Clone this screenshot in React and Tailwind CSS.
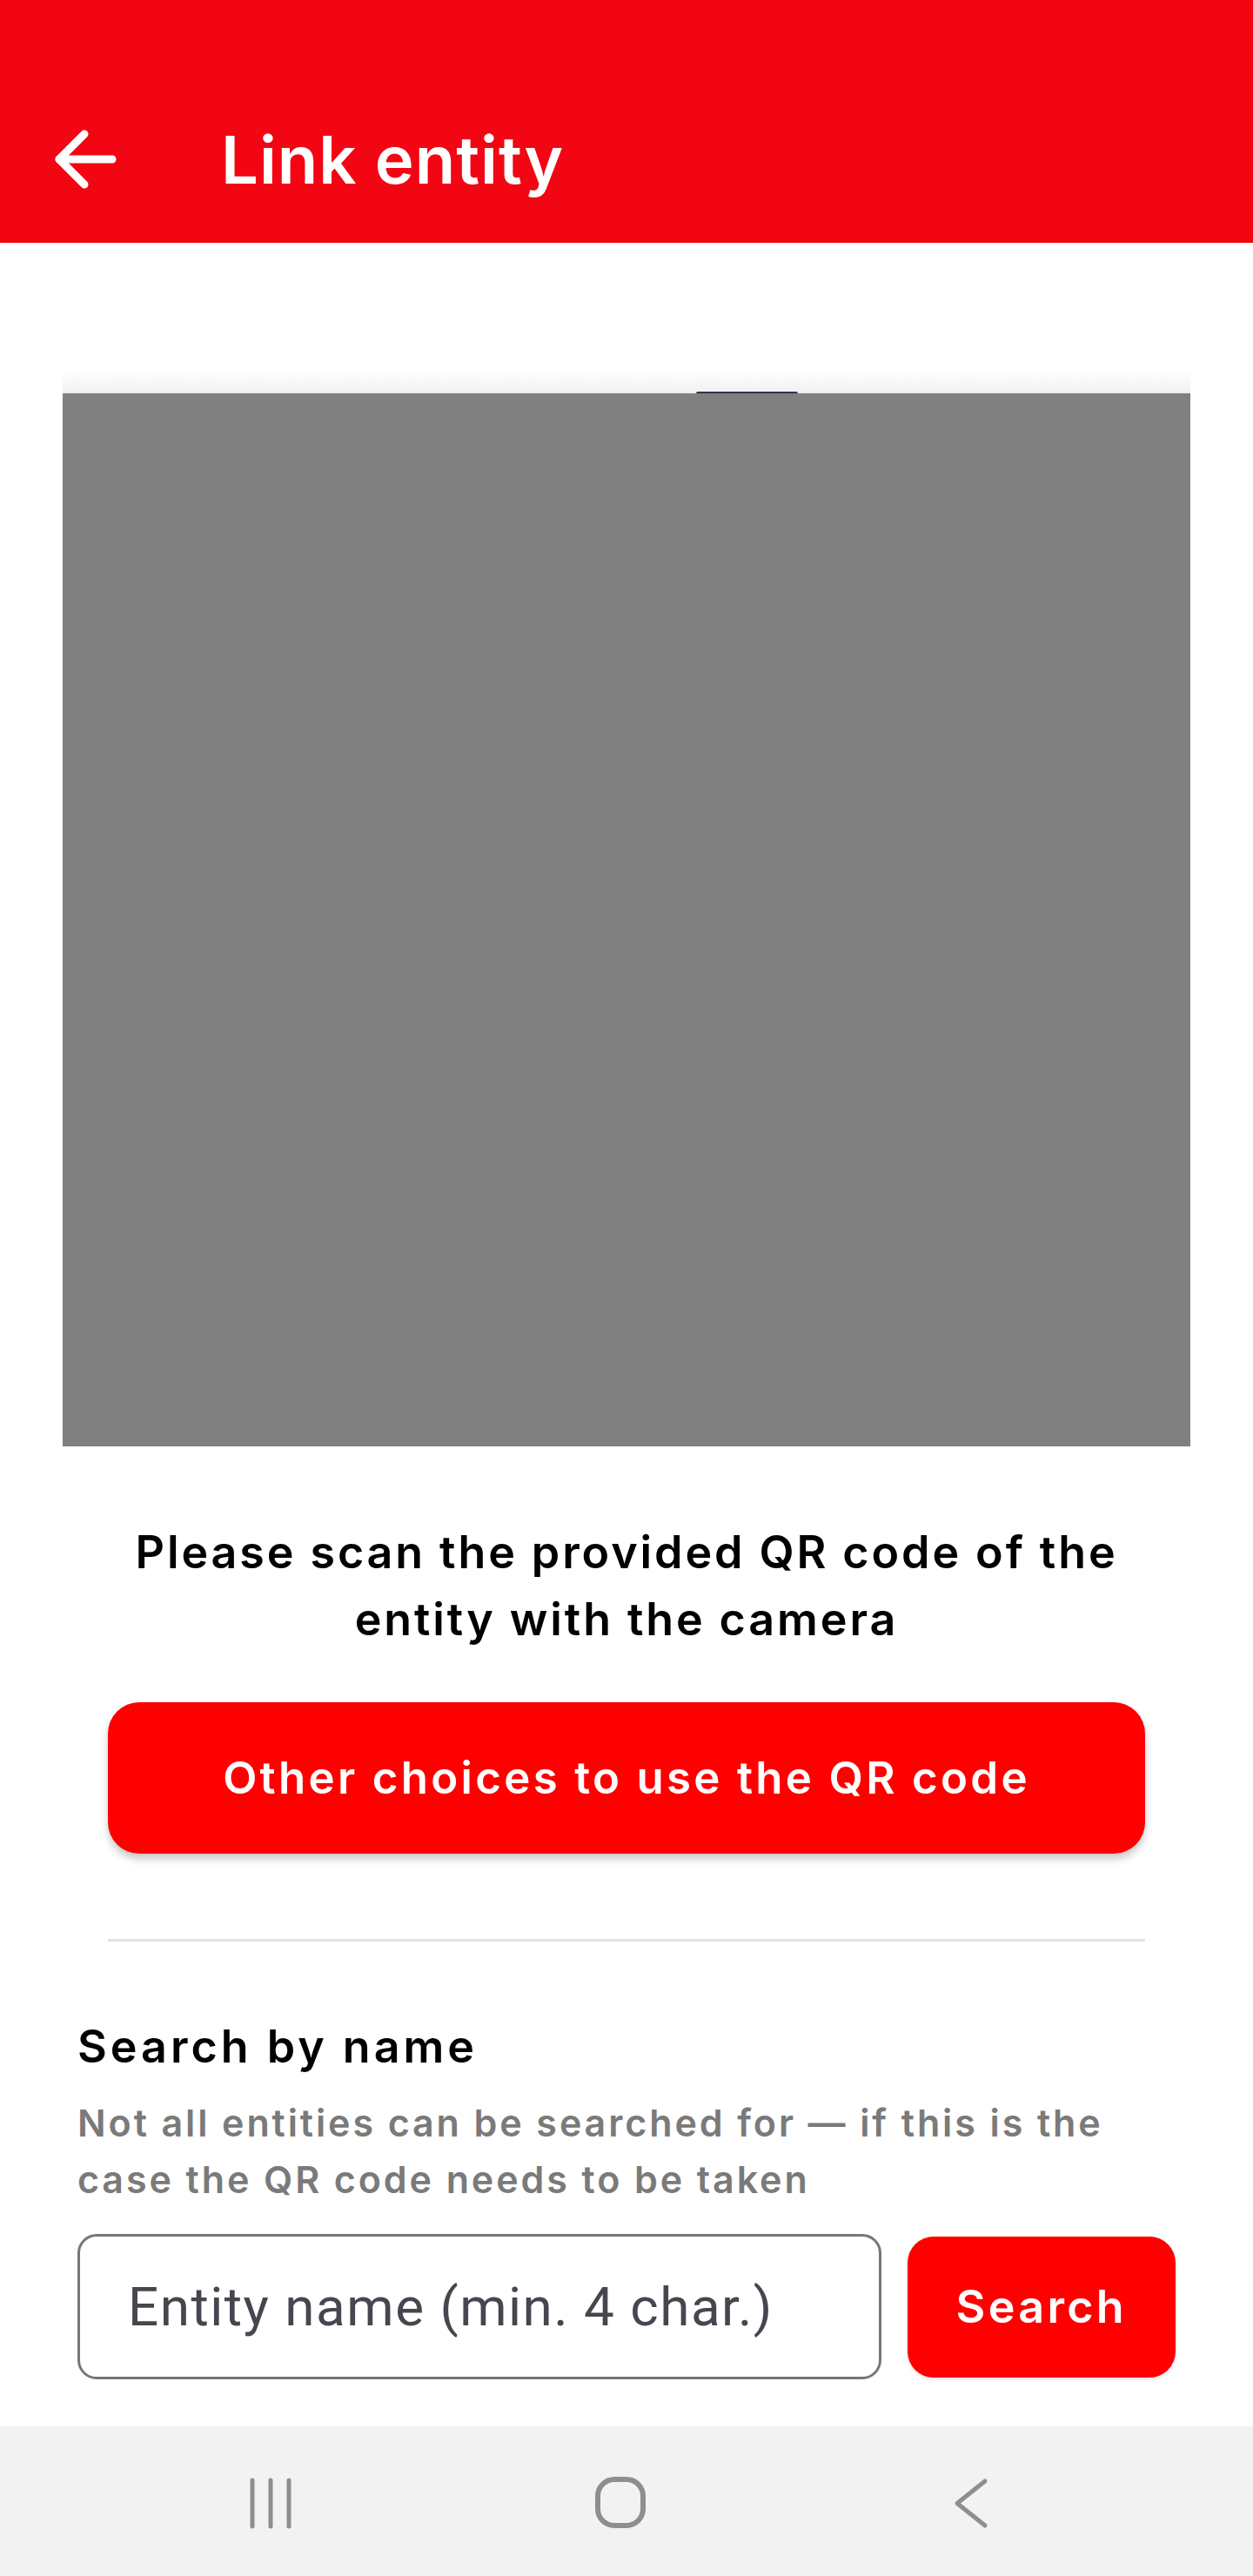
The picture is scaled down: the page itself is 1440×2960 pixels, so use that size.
import React from "react";

export default function App() {
  return (
    <div className="w-[1440px] h-[2960px] flex flex-col bg-white overflow-hidden font-['Inter',sans-serif]">
      {/* Header */}
      <header className="h-[279px] shrink-0 bg-[#f20613] pt-[90px]">
        <div className="h-[185px] flex items-center">
          <div className="ml-[59px] w-[80px] h-[80px] shrink-0">
            <svg width="80" height="80" viewBox="0 0 80 80" fill="none">
              <path d="M9 40 H70" stroke="white" strokeWidth="9" strokeLinecap="round" />
              <path d="M38 11 L9 40 L38 69" stroke="white" strokeWidth="9" strokeLinecap="round" strokeLinejoin="round" />
            </svg>
          </div>
          <h1 className="ml-[115px] text-white text-[76px] leading-none font-semibold tracking-[1px]">
            Link entity
          </h1>
        </div>
      </header>

      {/* Main */}
      <main className="flex-1 flex flex-col">
        <div className="mt-[146px] mx-[72px] h-[27px] bg-gradient-to-b from-white to-[#f1f1f1] relative">
          <div className="absolute left-0 right-0 bottom-0 h-[1px] bg-[#dcedf2]" />
          <div className="absolute left-[728px] bottom-0 w-[117px] h-[2px] bg-[#2f3447] rounded-t-sm" />
        </div>
        <div className="mx-[72px] h-[1210px] bg-[#808080]" />

        <p className="mt-[83px] text-center text-black text-[52px] leading-[77px] font-semibold tracking-[2.9px]">
          Please scan the provided QR code of the
          <br />
          entity with the camera
        </p>

        <button className="mt-[57px] mx-[124px] h-[174px] rounded-[36px] bg-[#fe0000] text-white text-[51px] font-semibold tracking-[3.3px] shadow-[0_6px_10px_rgba(0,0,0,0.22)] flex items-center justify-center">
          Other choices to use the QR code
        </button>

        <div className="mt-[98px] mx-[124px] h-[3px] bg-[#e2e2e2]" />

        <div className="mx-[89px]">
          <h2 className="mt-[91px] text-black text-[52px] leading-[60px] font-semibold tracking-[4px]">Search by name</h2>
          <p className="mt-[25px] text-[#7a7a7a] text-[43px] leading-[65px] font-semibold tracking-[2.9px] whitespace-nowrap">
            Not all entities can be searched for — if this is the
            <br />
            case the QR code needs to be taken
          </p>
          <div className="mt-[30px] flex items-center gap-[30px]">
            <div className="w-[925px] h-[167px] rounded-[22px] border-[3px] border-[#79747e] flex items-center pl-[55px]">
              <span className="text-[62px] text-[#49454f] font-['Roboto',sans-serif] leading-none tracking-[1.5px]">
                Entity name (min. 4 char.)
              </span>
            </div>
            <button className="w-[309px] h-[162px] rounded-[30px] bg-[#fe0000] text-white text-[52px] font-semibold tracking-[3.3px] shadow-[0_2px_4px_rgba(0,0,0,0.12)] flex items-center justify-center">
              Search
            </button>
          </div>
        </div>
      </main>

      {/* Nav bar */}
      <nav className="h-[172px] shrink-0 bg-[#f2f2f2] flex items-start pt-[58px] pl-[110px]">
        <div className="w-[402px] flex justify-center">
          <svg width="60" height="60" viewBox="0 0 60 60" fill="none">
            <path d="M9 4 V57 M30 4 V57 M51 4 V57" stroke="#8e8e8e" strokeWidth="5" strokeLinecap="round" />
          </svg>
        </div>
        <div className="w-[402px] flex justify-center">
          <svg width="60" height="60" viewBox="0 0 60 60" fill="none">
            <rect x="4" y="3" width="52" height="53" rx="19" stroke="#8e8e8e" strokeWidth="6" />
          </svg>
        </div>
        <div className="w-[402px] flex justify-center">
          <svg width="60" height="60" viewBox="0 0 60 60" fill="none">
            <path d="M47 5 L15 30.5 L47 56" stroke="#8e8e8e" strokeWidth="5" strokeLinecap="round" strokeLinejoin="round" />
          </svg>
        </div>
      </nav>
    </div>
  );
}
